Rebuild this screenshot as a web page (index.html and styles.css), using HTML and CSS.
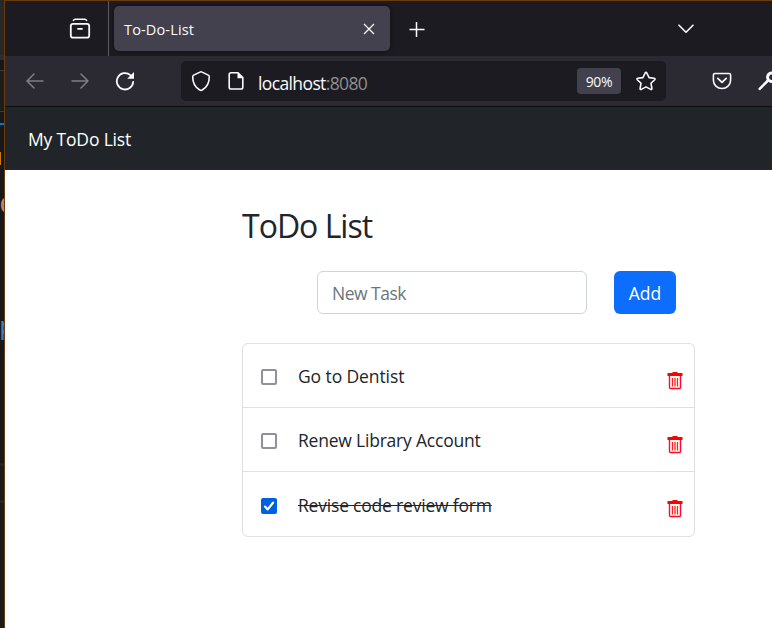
FILE: index.html
```
<!DOCTYPE html>
<html lang="en">
<head>
<meta charset="utf-8">
<title>To-Do-List</title>
<link rel="stylesheet" href="styles.css">
</head>
<body>
<svg class="defs" width="0" height="0">
  <symbol id="trash" viewBox="0 0 16 18">
    <path d="M.5 1h5V0h5v1h5v3H.5z" fill="#f00"/>
    <path d="M2.500 4v11.500q0 1 1 1h9q1 0 1-1V4" fill="none" stroke="#ff0b25" stroke-width="1.400"/>
    <path d="M5.500 6v8.500M8 6v8.500M10.500 6v8.500" stroke="#f22" stroke-width="1.300"/>
  </symbol>
</svg>
<div class="screen">
  <aside class="editor">
    <span class="blue-line"></span><span class="amber-bar"></span>
    <span class="glyph-e">e</span><span class="glyph-p">p</span>
  </aside>
  <div class="window">
    <div class="tabbar">
      <div class="view"><svg width="22" height="22" viewBox="0 0 22 22" fill="none" stroke="#fbfbfe" stroke-linecap="round"><path d="M4.400 2.500q.6-1.200 1.800-1.200h9.600q1.200 0 1.800 1.200" stroke-width="1.500"/><rect x="1.800" y="5.800" width="18.400" height="13.800" rx="2.200" stroke-width="1.800"/><path d="M9 10.800h4" stroke-width="1.800"/></svg></div>
      <div class="tab"><span class="t tab-title">To-Do-List</span><svg width="12" height="12" viewBox="0 0 12 12" stroke="#fbfbfe" stroke-width="1.300"><path d="M1 1l10 10M11 1L1 11"/></svg></div>
      <svg class="plus" width="16" height="16" viewBox="0 0 16 16" stroke="#fbfbfe" stroke-width="1.500"><path d="M.5 7.500h15M7.500 0v15"/></svg>
      <svg class="chevron" width="16" height="10" viewBox="0 0 16 10" fill="none" stroke="#fbfbfe" stroke-width="1.600" stroke-linecap="round" stroke-linejoin="round"><path d="M1 1.200l7 7 7-7"/></svg>
    </div>
    <div class="navbar">
      <svg class="back" width="18" height="16" viewBox="0 0 18 16" fill="none" stroke="#7f7e86" stroke-width="1.500" stroke-linecap="round" stroke-linejoin="round"><path d="M17 8H1M8 1L1 8l7 7"/></svg>
      <svg class="forward" width="18" height="16" viewBox="0 0 18 16" fill="none" stroke="#7f7e86" stroke-width="1.500" stroke-linecap="round" stroke-linejoin="round"><path d="M1 8h16M10 1l7 7-7 7"/></svg>
      <svg class="reload" width="20" height="20" viewBox="0 0 20 20"><path d="M15.400 4.100A8.200 8.200 0 1 0 18.200 10.800" fill="none" stroke="#fbfbfe" stroke-width="1.800" stroke-linecap="round"/><path d="M19 1v6.800h-6.800z" fill="#fbfbfe"/></svg>
      <div class="urlbar">
        <svg width="20" height="22" viewBox="0 0 20 22" fill="none" stroke="#fbfbfe" stroke-width="1.600" stroke-linejoin="round"><path d="M10 1.800q.6 0 1.100.3l6.200 3q1 .5 1 1.600Q18.300 16 11.200 20q-1.200.7-2.400 0Q1.700 16 1.700 6.700q0-1.100 1-1.600l6.200-3q.5-.3 1.100-.3z"/></svg>
        <svg class="page" width="16" height="20" viewBox="0 0 16 20"><path d="M10 1.800H3Q1.200 1.800 1.200 3.600v12.600Q1.200 18 3 18h10q1.800 0 1.800-1.800V6.600z" fill="none" stroke="#fbfbfe" stroke-width="1.600" stroke-linejoin="round"/><path d="M9.500 1.500v5.700h5.700z" fill="#fbfbfe"/></svg>
        <span class="t url">localhost<span class="port">:8080</span></span>
        <span class="zoom"><span class="t">90%</span></span>
        <svg class="star" width="22" height="21" viewBox="0 0 22 21" fill="none" stroke="#fbfbfe" stroke-width="1.600" stroke-linejoin="round"><path d="M10.200 2q.8-1.300 1.600 0l2.300 4.600 5.100.7q1.500.3.500 1.400L16 12.300l.9 5.200q.1 1.400-1.200.9L11 15.900l-4.700 2.500q-1.300.5-1.200-.9L6 12.300 2.300 8.700q-1-1.100.5-1.400l5.100-.7z"/></svg>
      </div>
      <svg class="pocket" width="20" height="18" viewBox="0 0 20 18" fill="none" stroke="#fbfbfe" stroke-width="1.600" stroke-linecap="round" stroke-linejoin="round"><path d="M3 1.500h14q1.600 0 1.600 1.600v5.200a8.600 8.200 0 0 1-17.200 0V3.100Q1.400 1.500 3 1.500z"/><path d="M5.800 6.400L10 10.300l4.200-3.900" stroke-width="1.800"/></svg>
      <svg class="wrench" width="20" height="20" viewBox="0 0 20 20" fill="none" stroke="#fbfbfe" stroke-linecap="round"><path d="M1.700 17.800L10 9.500" stroke-width="2.600"/><path d="M14.500 2A4.300 4.300 0 1 0 18 7.500" stroke-width="3"/></svg>
    </div>
    <header class="site"><span class="t brand">My ToDo List</span></header>
    <main>
      <h1 class="t">ToDo List</h1>
      <form class="entry"><div class="field"><span class="t placeholder">New Task</span></div><button type="button"><span class="t add">Add</span></button></form>
      <ul class="tasks">
        <li><span class="box"></span><span class="t dentist">Go to Dentist</span><svg class="trash" width="16" height="18"><use href="#trash"/></svg></li>
        <li><span class="box"></span><span class="t renew">Renew Library Account</span><svg class="trash" width="16" height="18"><use href="#trash"/></svg></li>
        <li><span class="box checked"><svg width="16" height="16" viewBox="0 0 16 16" fill="none" stroke="#fff" stroke-width="2.200" stroke-linecap="round" stroke-linejoin="round"><path d="M4 8.600l2.700 2.800L12 4.700"/></svg></span><span class="t revise">Revise code review form</span><svg class="trash" width="16" height="18"><use href="#trash"/></svg></li>
      </ul>
    </main>
  </div>
</div>
</body>
</html>
```
FILE: styles.css
```
* { box-sizing: border-box; }
body { margin: 0; font-family: "Open Sans", "Noto Sans", sans-serif; font-size: 17.5px; color: #212529; overflow: hidden; }
svg { display: block; flex: none; }
.defs { position: absolute; }
.t { white-space: nowrap; line-height: 24px; display: block; }
.screen { display: flex; width: 772px; height: 628px; overflow: hidden; }
.editor { position: relative; flex: none; width: 4px; overflow: hidden;
  background: linear-gradient(#282828 0 55px, #2d2d2f 55px 60px, #171717 60px 70px, #3b3b3b 70px 71px, #1d1d1b 71px 111px, #3b3b3b 111px 112px, #181818 112px 463px, #252525 463px 466px, #1a1a1a 466px 500px, #252525 500px 503px, #1a1a1a 503px); }
.blue-line, .amber-bar, .glyph-e, .glyph-p { position: absolute; left: 0; }
.blue-line { top: 123px; width: 4px; height: 2px; background: #0078d4; }
.amber-bar { top: 152px; width: 1px; height: 13px; background: #c47b16; }
.glyph-e { top: 189px; left: -1px; color: #c88369; font: 30px/32px "Liberation Mono", monospace; }
.glyph-p { top: 312px; left: -1px; color: #3d7fb8; font: 26px/32px "Liberation Mono", monospace; }
.window { flex: 1; min-width: 0; border: solid #6c3b0d; border-width: 1px 0 0 1px; background: #fff; }
.tabbar { display: flex; align-items: center; height: 55px; background: #1c1b22; }
.view { width: 104px; height: 55px; padding: 17px 0 0 64px; border-right: 1px solid #5b5a61; }
.tab { display: flex; align-items: center; justify-content: space-between; width: 276px; height: 45px; margin-left: 5px; padding: 0 15px 0 10px; border-radius: 5px; background: #42414d; color: #fbfbfe; box-shadow: 0 0 4px #0008; }
.tab-title { padding-top: 2px; font-size: 14.5px; letter-spacing: .15px; }
.plus { margin: 3px 0 0 19px; }
.chevron { margin-left: 253px; }
.navbar { display: flex; align-items: center; height: 51px; padding-left: 21px; background: #2b2a33; border-bottom: 1px solid #0c0c0d; overflow: hidden; }
.forward { margin-left: 27px; }
.reload { margin-left: 26px; }
.urlbar { display: flex; align-items: center; flex: none; width: 485px; height: 40px; margin-left: 46px; padding-left: 10px; border-radius: 5px; background: #1c1b22; color: #fbfbfe; }
.page { margin-left: 17px; }
.url { width: 319px; margin-left: 14px; padding-top: 3px; letter-spacing: -.62px; }
.port { color: #8f8e94; }
.zoom { display: flex; align-items: center; justify-content: center; width: 44px; height: 26px; padding-top: 2px; border-radius: 4px; background: #42414d; font-size: 14px; letter-spacing: -.3px; }
.star { margin-left: 14px; }
.pocket { margin-left: 46px; }
.wrench { margin-left: 26px; }
.site { display: flex; align-items: center; height: 63px; padding: 1px 0 0 23px; background: #212529; color: #fff; }
.brand { letter-spacing: -.17px; }
main { width: 453px; margin-left: 237px; padding-top: 36px; }
h1 { margin: 0; font-size: 32px; font-weight: 400; }
h1.t { line-height: 40px; letter-spacing: -1px; }
.entry { display: flex; gap: 27px; margin: 25px 0 0 75px; }
.field { width: 270px; height: 43px; padding: 9px 14px; border: 1px solid #ced4da; border-radius: 6px; color: #6c757d; }
.placeholder { letter-spacing: -.5px; }
button { width: 62px; height: 43px; padding: 0; border: 0; border-radius: 6px; background: #0d6efd; color: #fff; font: inherit; }
.tasks { margin: 29px 0 0; padding: 0; list-style: none; border: 1px solid #dfdfdf; border-radius: 6px; }
.tasks li { display: flex; align-items: center; height: 64px; padding: 3px 11px 0 18px; }
.tasks li + li { border-top: 1px solid #dfdfdf; }
.tasks li:first-child { height: 63px; }
.tasks li:last-child { height: 65px; }
.tasks .t { margin-top: -2px; }
.box { flex: none; width: 16px; height: 16px; margin-right: 21px; border: 2px solid #8f8f9d; border-radius: 2px; }
.checked { border: 0; background: #0060df; }
.trash { margin: 7px 0 0 auto; }
.tasks li:last-child .trash { margin-top: 6px; }
.dentist { letter-spacing: -.1px; }
.renew { letter-spacing: -.21px; }
.revise { letter-spacing: -.2px; text-decoration: line-through; }
```
